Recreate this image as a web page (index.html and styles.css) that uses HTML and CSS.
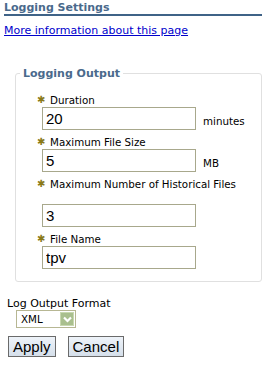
FILE: index.html
```html
<!DOCTYPE html>
<html lang="en">

<head>
    <meta charset="UTF-8">
    <meta name="viewport" content="width=device-width, initial-scale=1.0">
    <title>Logging Settings</title>
    <link rel="stylesheet" href="styles.css">
</head>

<body>
    <h1 class="page-title">Logging Settings</h1>
    <a class="more-info" href="#">More information about this page</a>

    <fieldset class="group">
        <legend>Logging Output</legend>

        <div class="field">
            <label class="field-label"><span class="req">&#10033;</span>Duration</label>
            <div class="field-row">
                <input type="text" class="text-input" value="20">
                <span class="unit">minutes</span>
            </div>
        </div>

        <div class="field">
            <label class="field-label"><span class="req">&#10033;</span>Maximum File Size</label>
            <div class="field-row">
                <input type="text" class="text-input" value="5">
                <span class="unit">MB</span>
            </div>
        </div>

        <div class="field">
            <label class="field-label tall"><span class="req">&#10033;</span>Maximum Number of Historical Files</label>
            <div class="field-row">
                <input type="text" class="text-input" value="3">
            </div>
        </div>

        <div class="field">
            <label class="field-label"><span class="req">&#10033;</span>File Name</label>
            <div class="field-row">
                <input type="text" class="text-input" value="tpv">
            </div>
        </div>
    </fieldset>

    <div class="format">
        <label class="format-label">Log Output Format</label>
        <div class="select-box">
            <span class="select-value">XML</span>
            <span class="select-arrow">
                <svg width="11" height="11" viewBox="0 0 11 11">
                    <path d="M2 3.5 L5.5 7 L9 3.5" fill="none" stroke="#fff" stroke-width="2.2"/>
                </svg>
            </span>
        </div>
    </div>

    <div class="buttons">
        <button type="button" class="btn">Apply</button>
        <button type="button" class="btn">Cancel</button>
    </div>
</body>

</html>
```

FILE: styles.css
```css
body {
    margin: 0;
    padding: 2px 3px 0 4px;
    font-family: "DejaVu Sans", Verdana, sans-serif;
    font-size: 11px;
    color: #000;
    background: #fff;
}

.page-title {
    margin: 0;
    padding-bottom: 1px;
    font-size: 11px;
    font-weight: bold;
    color: #4a6a8c;
    border-bottom: 2px solid #3f6387;
    line-height: 11px;
}

.more-info {
    display: block;
    margin-top: 8px;
    color: #0000cc;
    line-height: 13px;
}

.group {
    margin: 30px 0 0 11px;
    padding: 14px 0 12px 0;
    border: 1px solid #e0e0e0;
    border-radius: 3px;
}

.group legend {
    margin-left: 4px;
    padding: 0 3px;
    font-size: 11px;
    font-weight: bold;
    color: #4a6a8c;
}

.field {
    margin: 6px 0 0 26px;
}

.field:first-of-type {
    margin-top: 0;
}

.field-label {
    display: block;
    margin-left: -5px;
    line-height: 13px;
    font-size: 10.3px;
}

.field-label.tall {
    margin-bottom: 13px;
}

.req {
    display: inline-block;
    width: 13px;
    font-size: 10px;
    line-height: 10px;
    color: #8a7a18;
    vertical-align: 1px;
}

.field-row {
    display: flex;
    align-items: flex-end;
}

.text-input {
    box-sizing: border-box;
    width: 154px;
    height: 23px;
    margin: 0;
    padding: 1px 3px;
    border: 1px solid #a8a88c;
    font-family: "Liberation Sans", Arial, sans-serif;
    font-size: 15px;
    color: #000;
}

.unit {
    margin: 0 0 2px 7px;
    font-size: 10.3px;
    line-height: 13px;
}

.format {
    margin-top: 15px;
    padding-left: 3px;
}

.format-label {
    display: block;
    line-height: 13px;
}

.select-box {
    box-sizing: border-box;
    display: flex;
    align-items: center;
    justify-content: space-between;
    width: 60px;
    height: 18px;
    margin: 0 0 0 9px;
    padding: 0 1px 0 4px;
    border: 1px solid #b7b793;
}

.select-value {
    font-size: 10.3px;
}

.select-arrow {
    display: flex;
    align-items: center;
    justify-content: center;
    width: 14px;
    height: 14px;
    background: #a9bf8e;
    border: 1px solid #c8d8b0;
    box-sizing: border-box;
}

.buttons {
    display: flex;
    gap: 12px;
    margin-top: 8px;
    padding-left: 4px;
}

.btn {
    height: 21px;
    padding: 0 4px;
    border: 1px solid #6a6a6a;
    background: linear-gradient(#eef3f9, #d5dfea);
    font-family: "Liberation Sans", Arial, sans-serif;
    font-size: 15px;
    line-height: 19px;
    color: #000;
}
```
